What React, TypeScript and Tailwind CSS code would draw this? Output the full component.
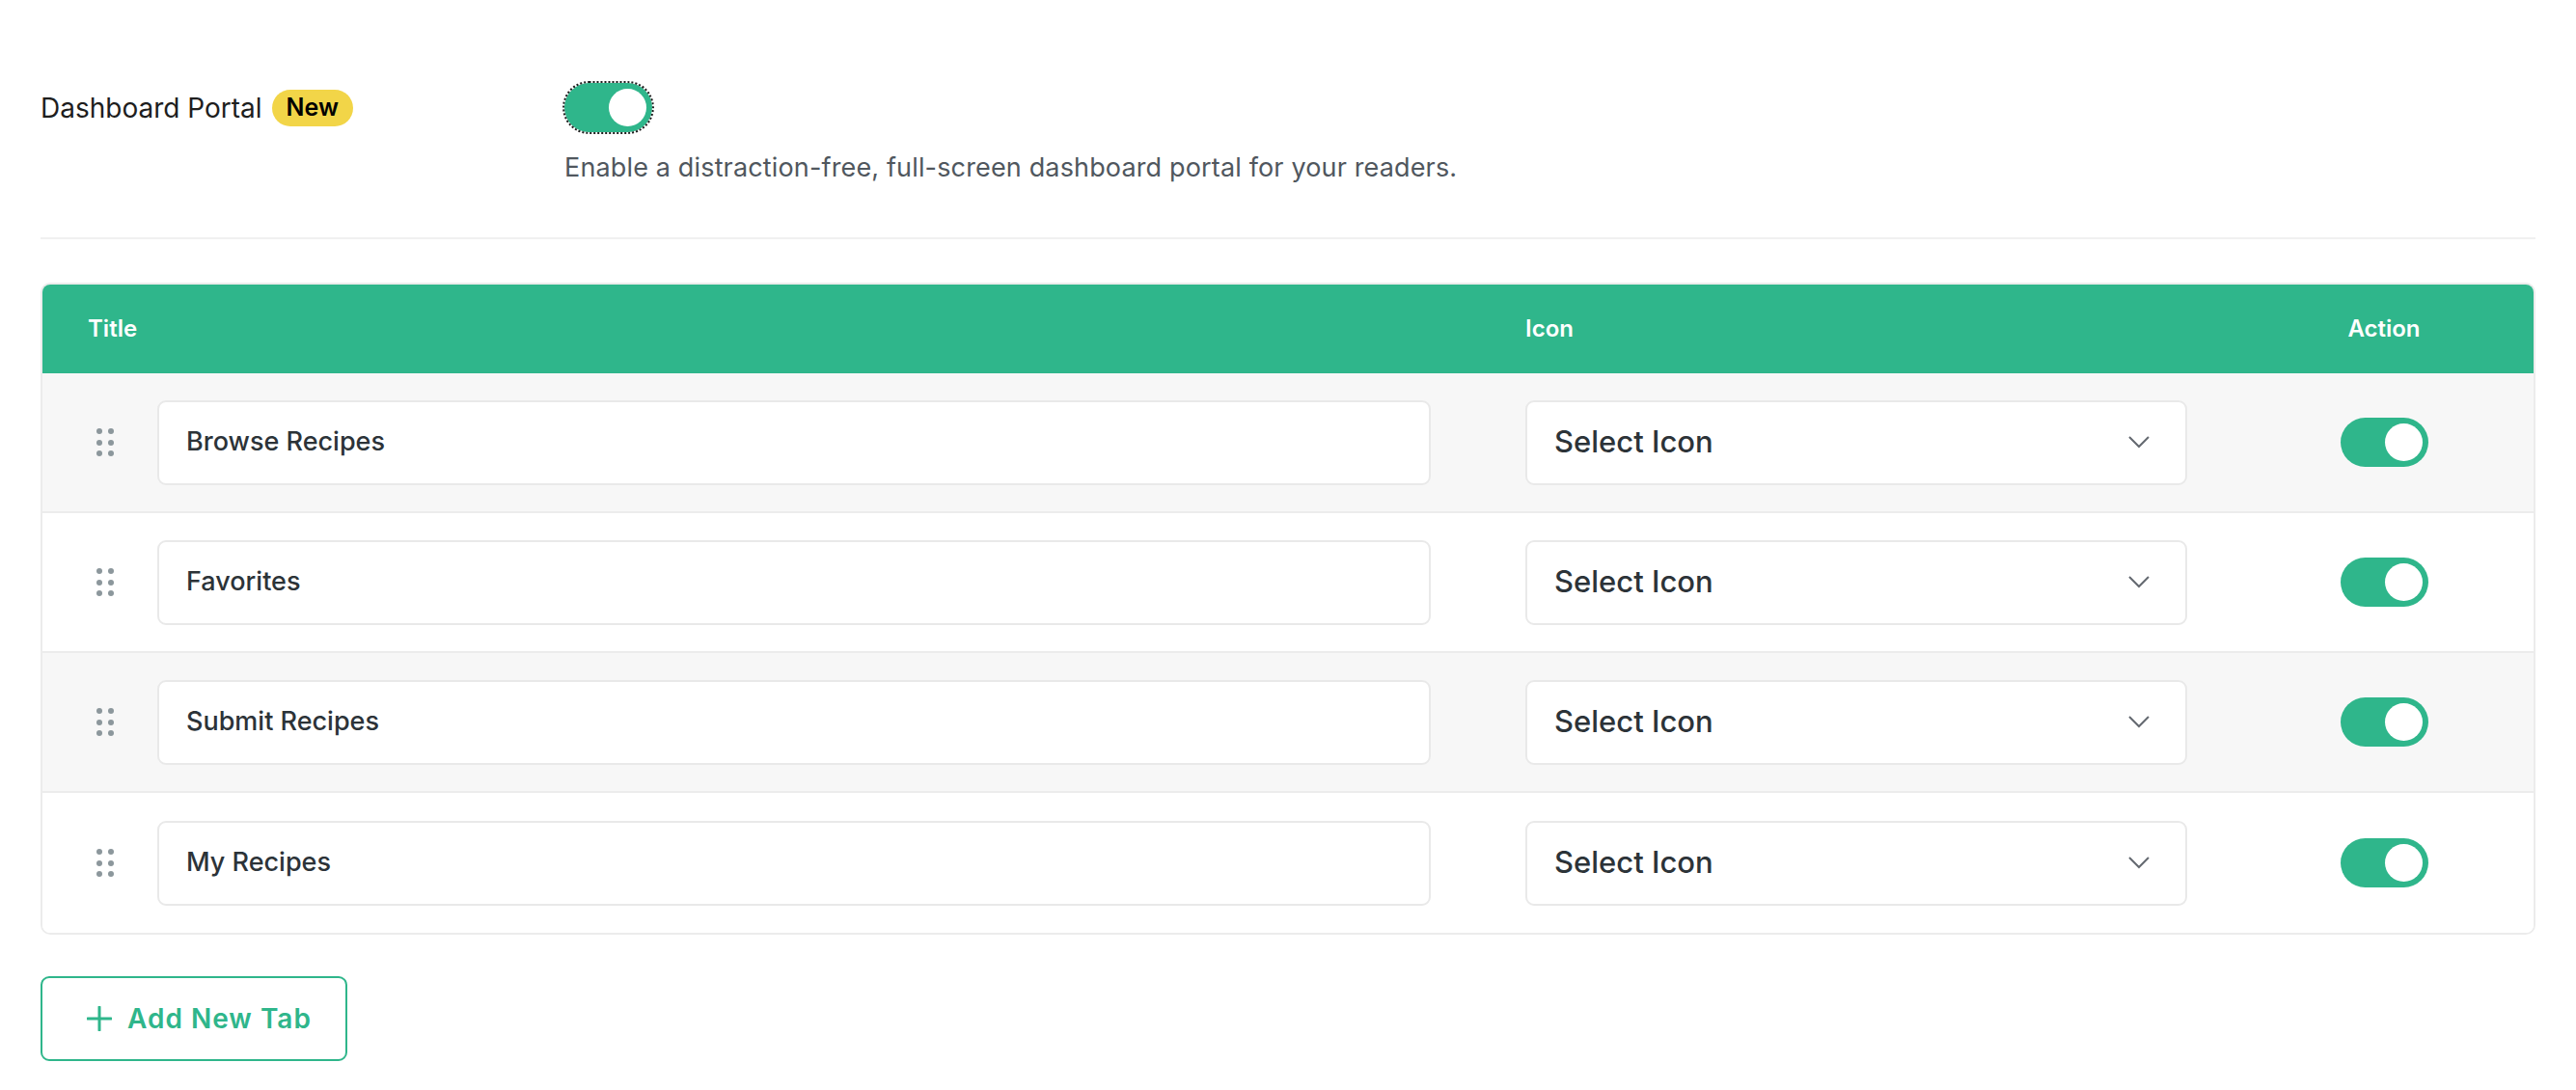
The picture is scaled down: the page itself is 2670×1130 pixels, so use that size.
import { useState } from 'react'

type Tab = { id: number; title: string; enabled: boolean }

const initialTabs: Tab[] = [
  { id: 1, title: 'Browse Recipes', enabled: true },
  { id: 2, title: 'Favorites', enabled: true },
  { id: 3, title: 'Submit Recipes', enabled: true },
  { id: 4, title: 'My Recipes', enabled: true },
]

function Toggle({ on, focused, onClick }: { on: boolean; focused?: boolean; onClick?: () => void }) {
  return (
    <button
      type="button"
      onClick={onClick}
      className={`flex items-center h-[51px] w-[91px] rounded-full px-[6px] ${on ? 'bg-[#2fb68b] justify-end' : 'bg-[#c3c4c7] justify-start'} ${focused ? 'outline-2 outline-dotted outline-[#1e1e1e]' : ''}`}
    >
      <span className="block h-[39px] w-[39px] rounded-full bg-white" />
    </button>
  )
}

function DragHandle() {
  return (
    <div className="grid grid-cols-2 gap-x-[6px] gap-y-[5.5px] w-[18px] shrink-0 cursor-move">
      {Array.from({ length: 6 }).map((_, i) => (
        <span key={i} className="block h-[6px] w-[6px] rounded-full bg-[#8c979c]" />
      ))}
    </div>
  )
}

function Chevron() {
  return (
    <svg width="22" height="13" viewBox="0 0 22 13" fill="none">
      <polyline points="1,1 11,11 21,1" stroke="#646970" strokeWidth="2" />
    </svg>
  )
}

export default function App() {
  const [portal, setPortal] = useState(true)
  const [tabs, setTabs] = useState(initialTabs)

  const flip = (id: number) =>
    setTabs((t) => t.map((x) => (x.id === id ? { ...x, enabled: !x.enabled } : x)))

  return (
    <div className="min-h-screen bg-white px-[42px] pt-[86px] font-['Inter','Noto_Sans',sans-serif] text-[#1e1e1e]">
      {/* setting row */}
      <div className="flex">
        <div className="w-[543px] h-[51px] flex items-center gap-[10px]">
          <span className="text-[28px] leading-none text-[#1e1e1e]">Dashboard Portal</span>
          <span className="h-[38px] px-[15px] rounded-full bg-[#f2d548] flex items-center text-[25px] font-semibold text-black">
            New
          </span>
        </div>
        <div>
          <Toggle on={portal} focused onClick={() => setPortal(!portal)} />
          <p className="mt-[17px] text-[27px] leading-[39px] tracking-[0.15px] text-[#50575e]">
            Enable a distraction-free, full-screen dashboard portal for your readers.
          </p>
        </div>
      </div>

      <div className="mt-[53px] h-[2px] bg-[#f0f0f0]" />

      {/* tabs table */}
      <div className="mt-[45px] border-2 border-[#ececec] rounded-[10px] overflow-hidden">
        <div className="flex items-center h-[92px] bg-[#2fb68b] text-white text-[24px] font-semibold">
          <div className="w-[1439px] pl-[47px]">Title</div>
          <div className="ml-[98px] w-[686px]">Icon</div>
          <div className="ml-[49px] flex-1 text-center">Action</div>
        </div>

        {tabs.map((tab, i) => (
          <div
            key={tab.id}
            className={`flex items-center h-[145px] ${i % 2 === 0 ? 'bg-[#f7f7f7]' : 'bg-white'} ${i < tabs.length - 1 ? 'border-b-2 border-[#ececec]' : ''}`}
          >
            <div className="w-[1439px] pl-[56px] flex items-center gap-[45px]">
              <DragHandle />
              <div className="w-[1320px] h-[88px] flex items-center px-[28px] bg-white border-2 border-[#e9e9e9] rounded-[9px] text-[27px] font-medium text-[#2c3338]">
                {tab.title}
              </div>
            </div>
            <div className="ml-[98px] w-[686px] h-[88px] flex items-center justify-between pl-[28px] pr-[37px] bg-white border-2 border-[#e9e9e9] rounded-[9px]">
              <span className="text-[31px] font-medium text-[#2c3338]">Select Icon</span>
              <Chevron />
            </div>
            <div className="ml-[49px] flex-1 flex justify-center">
              <Toggle on={tab.enabled} onClick={() => flip(tab.id)} />
            </div>
          </div>
        ))}
      </div>

      <button
        type="button"
        className="mt-[43px] w-[318px] h-[88px] flex items-center gap-[16px] pl-[46px] border-2 border-[#2fb68b] rounded-[9px] text-[#2fb68b] text-[28px] font-semibold tracking-[1px]"
      >
        <svg width="26" height="26" viewBox="0 0 26 26" fill="none">
          <path d="M13 1v24M1 13h24" stroke="#2fb68b" strokeWidth="3" strokeLinecap="round" />
        </svg>
        Add New Tab
      </button>
    </div>
  )
}
